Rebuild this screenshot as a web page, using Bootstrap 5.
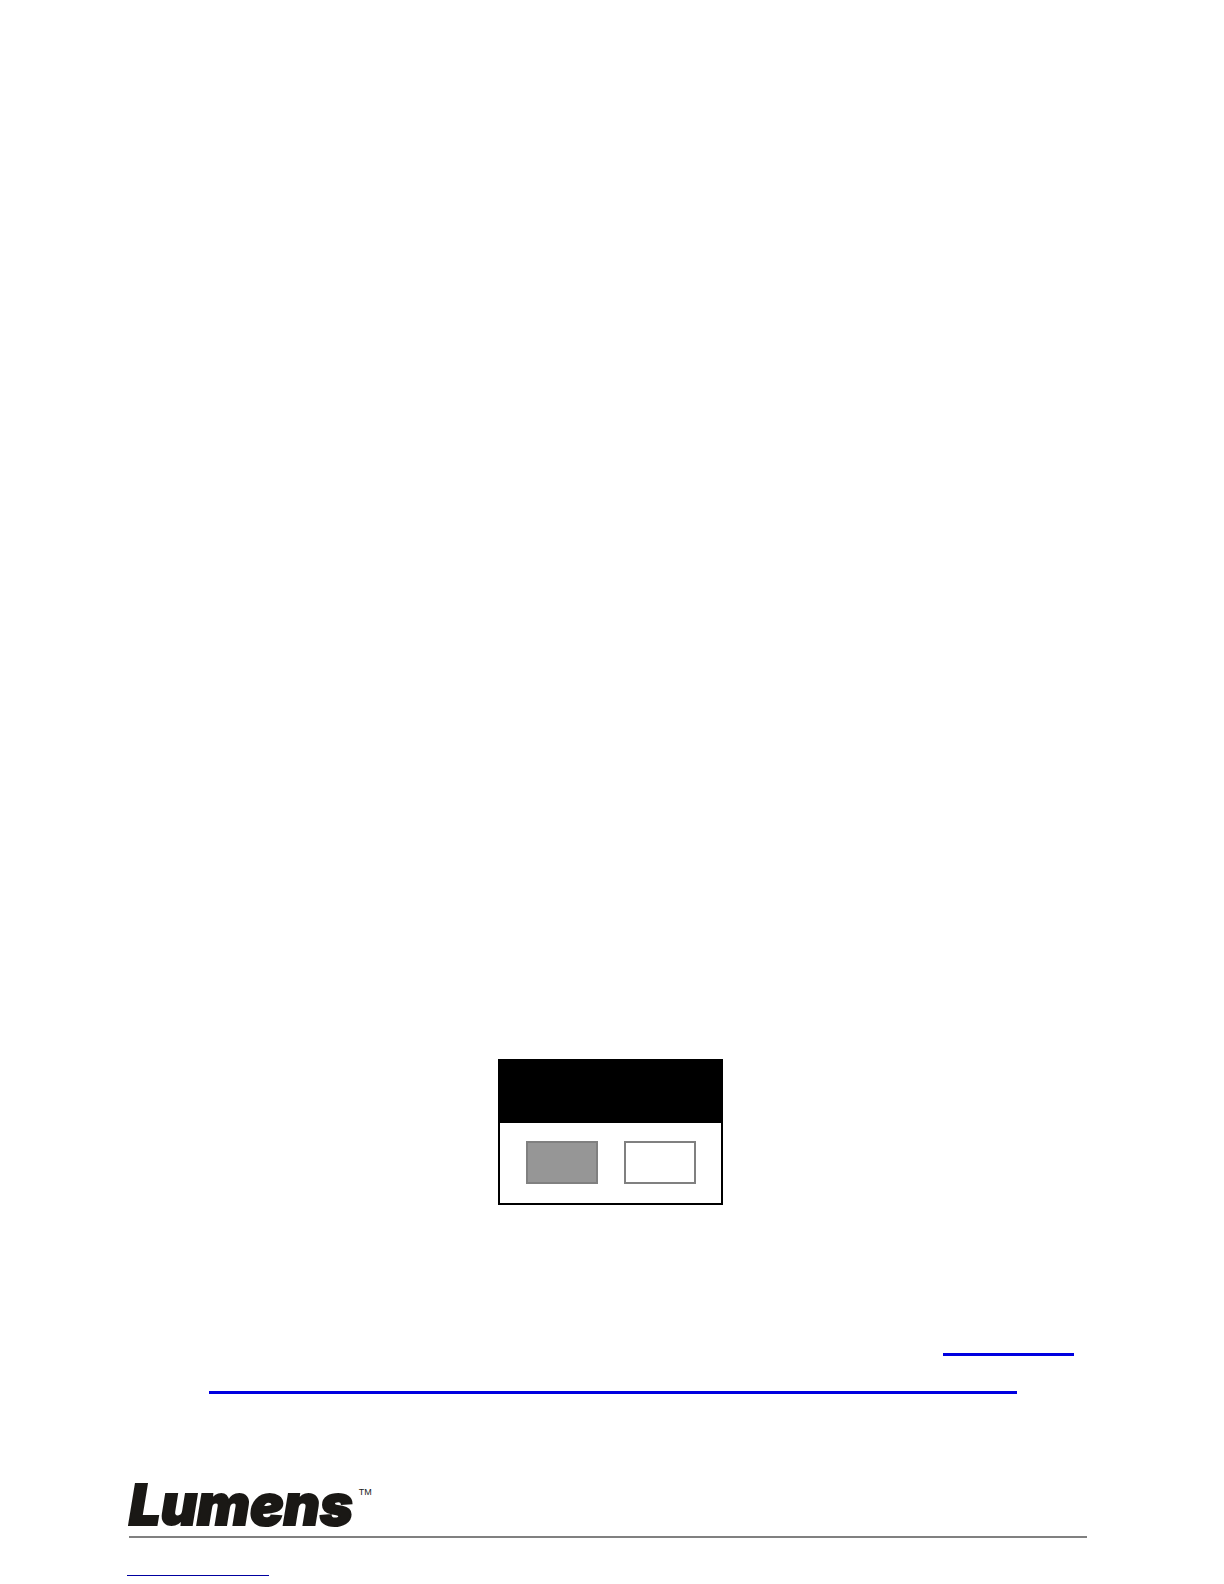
<!DOCTYPE html>
<html lang="en">
<head>
<meta charset="utf-8">
<meta name="viewport" content="width=device-width, initial-scale=1">
<title>Lumens</title>
<link rel="stylesheet" href="https://cdn.jsdelivr.net/npm/bootstrap@5.3.0/dist/css/bootstrap.min.css">
<style>
  body { background: #fff; font-family: "Liberation Sans", Arial, sans-serif; }
  .sheet { padding: 0 137px 8px 129px; }
  .figure-row { padding-left: 5px; margin-bottom: 148px; }
  .prompt-box { width: 225px; border: 2px solid #000; }
  .prompt-head { height: 62px; background: #000; }
  .prompt-body { gap: 26px; padding: 18px 0 19px; }
  .choice { width: 72px; height: 43px; border: 2px solid #808080; border-radius: 0; background: #fff; }
  .choice-on { background: #969696; }
  .link-lines { gap: 35px; padding: 0 13px 0 80px; margin-bottom: 81px; }
  .rule-link { height: 3px; background: #0000e0; }
  .rule-short { width: 131px; }
  .rule-long { width: 808px; max-width: 100%; }
  .brand-row { height: 63px; gap: 6px; border-bottom: 2px solid #808080; margin-bottom: 37px; }
  .brand-name { font: italic 900 56px/60px Inter, "Liberation Sans", sans-serif; color: #1a1815; -webkit-text-stroke: 2px #1a1815; }
  .brand-tm { font-size: 9px; line-height: 12px; color: #222; margin-top: 11px; }
  .foot-link { width: 142px; height: 1px; background: #0000a0; margin-left: -2px; }
</style>
<script defer src="https://cdn.jsdelivr.net/npm/bootstrap@5.3.0/dist/js/bootstrap.bundle.min.js"></script>
</head>
<body>
<div class="sheet min-vh-100 d-flex flex-column justify-content-end">
  <main>
    <div class="figure-row d-flex justify-content-center">
      <div class="prompt-box">
        <div class="prompt-head"></div>
        <div class="prompt-body d-flex justify-content-center">
          <button type="button" class="choice choice-on p-0" aria-label="Yes"></button>
          <button type="button" class="choice p-0" aria-label="No"></button>
        </div>
      </div>
    </div>
    <div class="link-lines d-flex flex-column">
      <a href="#" class="rule-link rule-short d-block align-self-end" aria-label="Lumens"></a>
      <a href="#" class="rule-link rule-long d-block" aria-label="Lumens website"></a>
    </div>
  </main>
  <footer>
    <div class="brand-row d-flex align-items-start">
      <span class="brand-name">Lumens</span>
      <span class="brand-tm">TM</span>
    </div>
    <a href="#" class="foot-link d-block" aria-label="Contact"></a>
  </footer>
</div>
</body>
</html>
